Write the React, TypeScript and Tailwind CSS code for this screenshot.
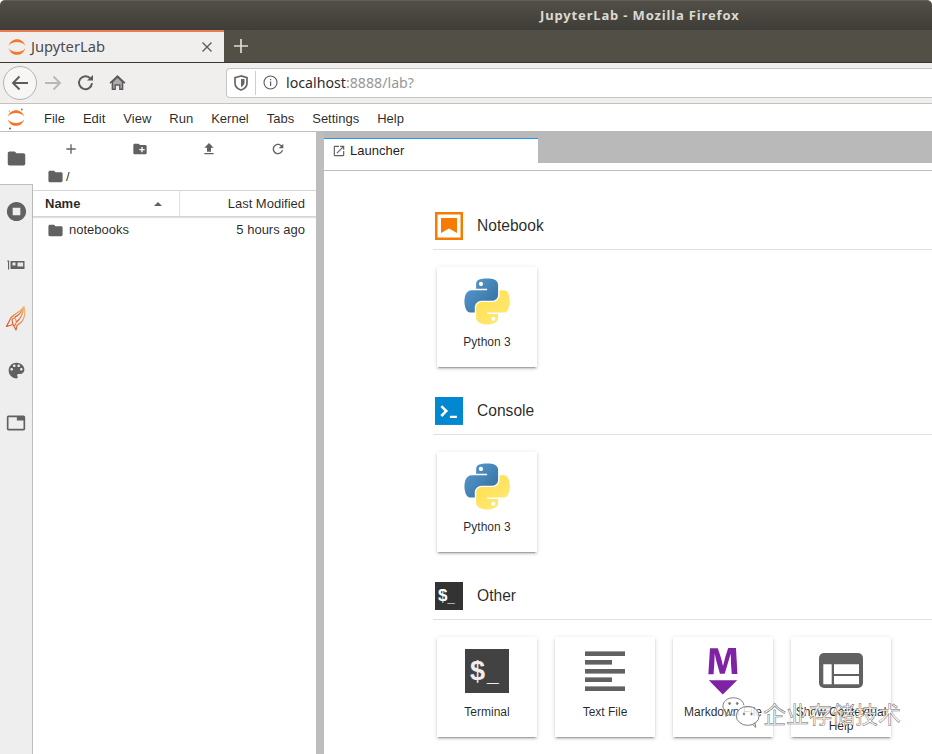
import React from "react";

const sans = "font-['Liberation_Sans',Arial,sans-serif]";
const ui = "font-['Noto_Sans','Open_Sans',sans-serif]";

const P = {
  folder: "M10 4H4c-1.1 0-1.99.9-1.99 2L2 18c0 1.1.9 2 2 2h16c1.1 0 2-.9 2-2V8c0-1.1-.9-2-2-2h-8l-2-2z",
  stop: "M12 2C6.48 2 2 6.48 2 12s4.48 10 10 10 10-4.48 10-10S17.52 2 12 2zm4 14H8V8h8v8z",
  palette:
    "M12 3c-4.97 0-9 4.03-9 9s4.03 9 9 9c.83 0 1.5-.67 1.5-1.5 0-.39-.15-.74-.39-1.01-.23-.26-.38-.61-.38-.99 0-.83.67-1.5 1.5-1.5H16c2.76 0 5-2.24 5-5 0-4.42-4.03-8-9-8zm-5.5 9c-.83 0-1.5-.67-1.5-1.5S5.67 9 6.5 9 8 9.67 8 10.5 7.33 12 6.5 12zm3-4C8.67 8 8 7.33 8 6.5S8.67 5 9.5 5s1.5.67 1.5 1.5S10.33 8 9.5 8zm5 0c-.83 0-1.5-.67-1.5-1.5S13.67 5 14.5 5s1.5.67 1.5 1.5S15.33 8 14.5 8zm3 4c-.83 0-1.5-.67-1.5-1.5S16.67 9 17.5 9s1.5.67 1.5 1.5-.67 1.5-1.5 1.5z",
  tab: "M21 3H3c-1.1 0-2 .9-2 2v14c0 1.1.9 2 2 2h18c1.1 0 2-.9 2-2V5c0-1.1-.9-2-2-2zm0 16H3V5h10v4h8v10z",
  add: "M19 13h-6v6h-2v-6H5v-2h6V5h2v6h6v2z",
  newFolder:
    "M20 6h-8l-2-2H4c-1.11 0-1.99.89-1.99 2L2 18c0 1.11.89 2 2 2h16c1.11 0 2-.89 2-2V8c0-1.11-.89-2-2-2zm-1 8h-3v3h-2v-3h-3v-2h3V9h2v3h3v2z",
  upload: "M9 16h6v-6h4l-7-7-7 7h4zm-4 2h14v2H5z",
  refresh:
    "M17.65 6.35C16.2 4.9 14.21 4 12 4c-4.42 0-7.99 3.58-7.99 8s3.57 8 7.99 8c3.73 0 6.84-2.55 7.73-6h-2.08c-.82 2.33-3.04 4-5.65 4-3.31 0-6-2.69-6-6s2.69-6 6-6c1.66 0 3.14.69 4.22 1.78L13 11h7V4l-2.35 2.35z",
  launch:
    "M19 19H5V5h7V3H5c-1.11 0-2 .9-2 2v14c0 1.1.89 2 2 2h14c1.1 0 2-.9 2-2v-7h-2v7zM14 3v2h3.59l-9.83 9.83 1.41 1.41L19 6.41V10h2V3h-7z",
};

function Mi({ d, size, color = "#616161" }: { d: string; size: number; color?: string }) {
  return (
    <svg width={size} height={size} viewBox="0 0 24 24" fill={color} className="block shrink-0">
      <path d={d} />
    </svg>
  );
}

function Jupyter({ size, dots }: { size: number; dots?: boolean }) {
  return (
    <svg width={size} height={size} viewBox="0 0 24 24" className="block shrink-0 overflow-visible">
      <path d="M2 10.500C5 0 19 0 22 10.500 18 4.500 6 4.500 2 10.500z" fill="#f37726" />
      <path d="M2 13.500C5 24 19 24 22 13.500 18 19.500 6 19.500 2 13.500z" fill="#f37726" />
      {dots && (
        <>
          <circle cx="19" cy="1.800" r="1.100" fill="#777" />
          <circle cx="4" cy="3.800" r="0.800" fill="#999" />
          <circle cx="4.800" cy="24.600" r="1.300" fill="#666" />
        </>
      )}
    </svg>
  );
}

function Python() {
  return (
    <svg width="52" height="52" viewBox="-8.3 -8.5 127 127" className="block">
      <defs>
        <linearGradient id="pyb" x1="0" y1="0" x2="1" y2="1">
          <stop offset="0" stopColor="#5a9fd4" />
          <stop offset="1" stopColor="#306998" />
        </linearGradient>
        <linearGradient id="pyy" x1="0.2" y1="0.1" x2="0.8" y2="0.9">
          <stop offset="0" stopColor="#ffe052" />
          <stop offset="1" stopColor="#ffe873" />
        </linearGradient>
      </defs>
      <path
        fill="url(#pyb)"
        d="M54.918785.00091927C50.335132.02221727 45.957846.41313697 42.106285 1.0946693 30.760069 3.0991731 28.700036 7.2947714 28.700035 15.032169v10.21875h26.8125v3.40625h-26.8125-10.0625c-7.792459 0-14.6157588 4.683717-16.7499998 13.59375-2.46181998 10.212966-2.57101508 16.586023 0 27.25 1.9059283 7.937852 6.4575432 13.593748 14.2499998 13.59375h9.21875v-12.25c0-8.849902 7.657144-16.656248 16.75-16.65625h26.78125c7.454951 0 13.406253-6.138164 13.40625-13.625v-25.53125c0-7.2663386-6.12998-12.7247771-13.40625-13.9375C64.281548.32794397 59.502438-.02037903 54.918785.00091927zm-14.5 8.21875c2.769547 0 5.03125 2.2986456 5.03125 5.125-.000002 2.816336-2.261703 5.09375-5.03125 5.09375-2.779476-.000001-5.03125-2.277415-5.03125-5.09375-.000001-2.8263544 2.251774-5.125 5.03125-5.125z"
      />
      <path
        fill="url(#pyy)"
        d="M85.637535 28.657169v11.90625c0 9.230755-7.825895 16.999999-16.75 17h-26.78125c-7.335833 0-13.406249 6.278483-13.40625 13.625v25.531247c0 7.266344 6.318588 11.540324 13.40625 13.625004 8.487331 2.49561 16.626237 2.94663 26.78125 0 6.750155-1.95439 13.406253-5.88761 13.40625-13.625004V86.500919h-26.78125v-3.40625h26.78125 13.406254c7.792461 0 10.696251-5.435408 13.406241-13.59375 2.79933-8.398886 2.74022-16.475776 0-27.25-1.92578-7.757441-5.60387-13.59375-13.406241-13.59375zm-15.0625 64.65625c2.779478.000003 5.03125 2.277417 5.03125 5.093747-.000002 2.826355-2.251775 5.125004-5.03125 5.125004-2.769549 0-5.03125-2.298649-5.03125-5.125004.000002-2.81633 2.261697-5.093747 5.03125-5.093747z"
      />
    </svg>
  );
}

function Card({ icon, label }: { icon: React.ReactNode; label: string }) {
  return (
    <div className="w-[100px] h-[100px] bg-white flex flex-col items-center pt-2 shadow-[0_2px_2px_0_rgba(0,0,0,0.14),0_3px_1px_-2px_rgba(0,0,0,0.2),0_1px_5px_0_rgba(0,0,0,0.12)]">
      <div className="w-[52px] h-[52px]">{icon}</div>
      <div className={`mt-[8px] text-[12px] leading-[14px] text-center text-black/85 w-[96px] ${sans}`}>{label}</div>
    </div>
  );
}

function Section({ icon, title, children }: { icon: React.ReactNode; title: string; children: React.ReactNode }) {
  return (
    <section className="pb-[30px]">
      <div className="flex items-center h-[27px] pl-[2px]">
        <div className="w-[28px] h-[28px] mr-[14px]">{icon}</div>
        <div className={`text-[15.6px] text-black/85 ${sans}`}>{title}</div>
      </div>
      <div className="mt-[10px] h-px bg-[#e0e0e0]" />
      <div className="flex gap-[18px] pl-[4px] pt-[17px]">{children}</div>
    </section>
  );
}

const NotebookIcon = (
  <svg width="28" height="28" viewBox="0 0 28 28" className="block">
    <rect x="1.250" y="1.250" width="25.500" height="25.500" fill="none" stroke="#f57c00" strokeWidth="2.500" />
    <path d="M6 6h16v15l-8-4.500-8 4.500z" fill="#f57c00" />
  </svg>
);

const ConsoleIcon = (
  <svg width="28" height="28" viewBox="20 20 160 160" className="block">
    <path fill="#0288d1" d="M20 19.8h160v159.9H20z" />
    <path fill="#fff" d="M105 127.3h40v12.8h-40zM51.1 77L74 99.9l-23.3 23.3 10.5 10.5 23.3-23.3L95 99.9 84.5 89.4 61.6 66.5z" />
  </svg>
);

const Sidebar = () => (
  <div className="w-[33px] shrink-0 flex flex-col">
    <div className="h-[53px] bg-white border-t border-[#bdbdbd] flex items-center justify-center pr-px">
      <Mi d={P.folder} size={21} />
    </div>
    <div className="flex-1 bg-[#eeeeee] border-t border-r border-[#bdbdbd] flex flex-col">
      <div className="h-[52px] flex items-center justify-center">
        <Mi d={P.stop} size={23} />
      </div>
      <div className="h-[55px] flex items-center justify-center">
        <svg width="20" height="12" viewBox="0 0 20 12" className="block">
          <path d="M1.500 1.500h1.600v9H2V3H1.500z" fill="#616161" />
          <path d="M4.500 2h14v8H4.500z" fill="#616161" />
          <path d="M11.500 3.400h5.600v4h-5.600zM6.500 3.400h3v3h-3z" fill="#e8e8e8" />
        </svg>
      </div>
      <div className="h-[52px] flex items-center justify-center">
        <svg width="22" height="28" viewBox="0 0 22 28" fill="none" className="block">
          <defs>
            <linearGradient id="fe" x1="0" y1="1" x2="1" y2="0">
              <stop offset="0" stopColor="#d9471f" />
              <stop offset="0.6" stopColor="#ea8a4a" />
              <stop offset="1" stopColor="#f6c27a" />
            </linearGradient>
          </defs>
          <g stroke="url(#fe)" strokeWidth="1.200" strokeLinejoin="round">
            <path d="M1.500 22.500L6 13.500C9.500 10 15 8.500 19 2.500 20.500 8 20 13 17 17.500L12 21.500 11 26 8 20.500z" />
            <path d="M8 20.500L7 15.500 10 13 11.500 18 9.500 22" />
            <path d="M11.500 18C15.500 15 18 10 19 2.500" />
            <path d="M10 13C13.500 11.500 16.500 8.500 19 2.500" />
          </g>
        </svg>
      </div>
      <div className="h-[53px] flex items-center justify-center">
        <Mi d={P.palette} size={21} />
      </div>
      <div className="h-[52px] flex items-center justify-center">
        <Mi d={P.tab} size={20} />
      </div>
    </div>
  </div>
);

const FilePanel = () => (
  <div className={`w-[283px] shrink-0 bg-white border-t border-[#bdbdbd] flex flex-col text-[13px] text-black/85 ${sans}`}>
    <div className="h-[34px] px-[3.5px] flex items-center">
      {[P.add, P.newFolder, P.upload, P.refresh].map((d) => (
        <div key={d} className="flex-1 flex justify-center">
          <Mi d={d} size={16} />
        </div>
      ))}
    </div>
    <div className="h-[24px] pl-[14px] pb-[3px] flex items-center gap-[2px]">
      <Mi d={P.folder} size={17} />
      <span>/</span>
    </div>
    <div className="h-[27px] border-t border-b border-[#d5d5d5] shadow-[0_1px_1px_rgba(0,0,0,0.12)] flex items-center">
      <div className="w-[147px] h-full flex items-center justify-between pl-[12px] pr-[17px] border-r border-[#e0e0e0] font-bold">
        <span>Name</span>
        <svg width="8" height="4" viewBox="0 0 8 4" className="block">
          <path d="M0 4L4 0l4 4z" fill="#616161" />
        </svg>
      </div>
      <div className="flex-1 text-right pr-[11px]">Last Modified</div>
    </div>
    <div className="h-[26px] flex items-center pl-[14px] pr-[11px]">
      <Mi d={P.folder} size={17} />
      <span className="ml-[5px]">notebooks</span>
      <span className="ml-auto">5 hours ago</span>
    </div>
  </div>
);

const LineIcon = (
  <svg width="52" height="52" viewBox="0 0 52 52" className="block" fill="#616161">
    <rect x="6" y="6.400" width="40" height="4.600" />
    <rect x="6" y="15" width="27" height="4.600" />
    <rect x="6" y="24" width="40" height="4.600" />
    <rect x="6" y="32.400" width="27" height="4.600" />
    <rect x="6" y="41.400" width="40" height="4.600" />
  </svg>
);

const TerminalIcon = (
  <div className="w-[52px] h-[52px] flex items-center justify-center">
    <div className={`w-[44px] h-[44px] bg-[#424242] flex items-center pl-[5px] text-[#eeeeee] font-bold ${sans}`}>
      <span className="text-[27px] leading-none">$</span>
      <span className="text-[21px] leading-none mt-[5px] ml-[2px]">_</span>
    </div>
  </div>
);

const MarkdownIcon = (
  <svg width="52" height="52" viewBox="0 0 22 22" className="block">
    <path
      fill="#7f22a6"
      d="M5 14.900h12l-6.100 6zm9.400-6.800c0-1.300-.1-2.900-.1-4.500-.4 1.400-.9 2.900-1.300 4.300l-1.300 4.300h-2L8.500 7.900c-.4-1.300-.7-2.900-1-4.300-.1 1.600-.1 3.200-.2 4.600L7 12.400H4.800l.7-11h3.300L10 5c.4 1.200.7 2.700 1 3.900.3-1.200.7-2.600 1-3.900l1.200-3.700h3.300l.6 11h-2.400l-.3-4.200z"
    />
  </svg>
);

const HelpIcon = (
  <svg width="52" height="52" viewBox="0 0 52 52" className="block">
    <rect x="4" y="8" width="44" height="35" rx="5" fill="#616161" />
    <path d="M8.300 19.300h8.400v20H8.300zM19 19.300h25V29H19zM19 31h25v8.300H19z" fill="#fff" />
  </svg>
);

const Launcher = () => (
  <div className="flex-1 min-w-0 bg-white flex flex-col overflow-hidden">
    <div className="h-[32px] bg-[#b9b9b9] shrink-0 flex items-end">
      <div className="w-[214px] h-[25px] bg-white border-t border-[#2196f3] flex items-center pl-[8px] gap-[4px]">
        <Mi d={P.launch} size={14} />
        <span className={`text-[13px] text-black/90 ${sans}`}>Launcher</span>
      </div>
    </div>
    <div className="h-[8px] shrink-0 bg-white border-b border-[#bdbdbd]" />
    <div className="pl-[109px] pt-[41px] w-[608px] shrink-0">
      <Section icon={NotebookIcon} title="Notebook">
        <Card icon={<Python />} label="Python 3" />
      </Section>
      <Section icon={ConsoleIcon} title="Console">
        <Card icon={<Python />} label="Python 3" />
      </Section>
      <Section
        icon={
          <div className={`w-[28px] h-[28px] bg-[#333333] flex items-center pl-[3px] text-white font-bold ${sans}`}>
            <span className="text-[17px] leading-none">$</span>
            <span className="text-[13px] leading-none mt-[4px]">_</span>
          </div>
        }
        title="Other"
      >
        <Card icon={TerminalIcon} label="Terminal" />
        <Card icon={LineIcon} label="Text File" />
        <Card icon={MarkdownIcon} label="Markdown File" />
        <Card icon={HelpIcon} label="Show Contextual Help" />
      </Section>
    </div>
  </div>
);

export default function App() {
  return (
    <div className="relative w-[932px] h-[754px] overflow-hidden bg-white flex flex-col">
      {/* window title */}
      <div className="h-[30px] shrink-0 bg-gradient-to-b from-[#514f47] to-[#3f3d37] border-t border-[#615e56] rounded-t-[5px] pl-[540px] flex items-center">
        <span className={`text-[13px] font-bold tracking-[0.85px] text-[#dcd9d2] ${ui}`}>JupyterLab - Mozilla Firefox</span>
      </div>
      {/* tab strip */}
      <div className="h-[33px] shrink-0 bg-[#524f47] border-b border-[#37352f] flex items-stretch">
        <div className="w-[224px] bg-[#f0efed] border-t-2 border-[#e97b50] flex items-center pl-[7px] pr-[11px] pb-[1px]">
          <Jupyter size={20} />
          <span className={`ml-[4px] text-[14.7px] text-[#4b4b50] ${ui}`}>JupyterLab</span>
          <svg width="12" height="12" viewBox="0 0 12 12" className="ml-auto block" stroke="#5c5c5f" strokeWidth="1.400">
            <path d="M1.500 1.500l9 9M10.500 1.500l-9 9" />
          </svg>
        </div>
        <div className="w-[34px] flex items-center justify-center">
          <svg width="14" height="14" viewBox="0 0 14 14" stroke="#dedbd4" strokeWidth="1.700" className="block">
            <path d="M7 0v14M0 7h14" />
          </svg>
        </div>
      </div>
      {/* nav bar */}
      <div className="h-[41px] shrink-0 bg-[#f0efed] border-b border-[#c3c2bf] flex items-center pl-[3px] pb-[1px]">
        <div className="w-[34px] h-[34px] rounded-full border border-[#b3b2af] bg-[#f7f6f5] flex items-center justify-center">
          <svg width="18" height="16" viewBox="0 0 18 16" fill="none" stroke="#5b5b5e" strokeWidth="1.900" className="block">
            <path d="M17 8H2M8.500 1.500L2 8l6.500 6.500" />
          </svg>
        </div>
        <svg width="18" height="16" viewBox="0 0 18 16" fill="none" stroke="#b9b8b6" strokeWidth="1.900" className="block ml-[7px]">
          <path d="M1 8h15M9.500 1.500L16 8l-6.500 6.500" />
        </svg>
        <svg width="17" height="16" viewBox="0 0 17 16" fill="none" className="block ml-[15px]">
          <path d="M13.500 3.500A6.500 6.500 0 1 0 15 8.200" stroke="#5b5b5e" strokeWidth="1.900" />
          <path d="M10 5.500h6V0z" fill="#5b5b5e" />
        </svg>
        <svg width="17" height="17" viewBox="0 0 16 16" className="block ml-[15px]">
          <path d="M8 1L0.500 8l1 1.100L2.500 8.200V15h4v-4h3v4h4V8.200l1 .9 1-1.100z" fill="#5b5b5e" />
          <path d="M4 7.600L8 3.800l4 3.800v6h-1.200v-4H5.200v4H4z" fill="#f0efed" opacity="0.550" />
        </svg>
        <div className="ml-[100px] flex-1 h-[30px] bg-white border border-[#c6c5c2] rounded-l-[4px] border-r-0 flex items-center pl-[7px]">
          <svg width="14" height="16" viewBox="0 0 14 16" className="block" fill="none">
            <path d="M7 1L1 2.600V8c0 3.400 3 6 6 7 3-1 6-3.600 6-7V2.600z" stroke="#666" strokeWidth="1.700" />
            <path d="M7 4v8c2-.9 3.500-2.500 3.500-4.500V4z" fill="#666" />
          </svg>
          <div className="w-px h-[24px] bg-[#cfcecb] ml-[7px]" />
          <svg width="15" height="15" viewBox="0 0 15 15" className="block ml-[7px]" fill="none">
            <circle cx="7.500" cy="7.500" r="6.500" stroke="#5b5b5e" strokeWidth="1.100" />
            <path d="M7 6.500h1.200V11H7zM7 4h1.200v1.300H7z" fill="#5b5b5e" />
          </svg>
          <span className={`ml-[8px] text-[14.2px] ${ui}`}>
            <span className="text-[#2d2d30]">localhost</span>
            <span className="text-[#97979a]">:8888/lab?</span>
          </span>
        </div>
      </div>
      {/* app menu */}
      <div className="h-[27px] shrink-0 bg-white flex items-center pl-[6px]">
        <Jupyter size={20} dots />
        <div className={`ml-[18px] pt-[2px] flex gap-[18px] text-[13px] text-black/85 ${sans}`}>
          {["File", "Edit", "View", "Run", "Kernel", "Tabs", "Settings", "Help"].map((m) => (
            <span key={m}>{m}</span>
          ))}
        </div>
      </div>
      {/* workspace */}
      <div className="flex-1 min-h-0 flex">
        <Sidebar />
        <FilePanel />
        <div className="w-[8px] shrink-0 bg-[#bdbdbd]" />
        <Launcher />
      </div>
      {/* watermark */}
      <div className="absolute left-[722px] top-[696px] flex items-center">
        <svg width="40" height="34" viewBox="0 0 42 34" fill="none" stroke="#777" strokeWidth="1" className="block drop-shadow-[0_0_1px_rgba(255,255,255,0.9)]">
          <path d="M12 1C5.500 1 1 5 1 10c0 3 1.600 5.300 4 7l-1 3.500 4-2c1.500.4 2.500.6 4 .6" />
          <path d="M12 1c6 0 10.500 3.500 11 8" />
          <ellipse cx="27" cy="20" rx="12" ry="10" fill="rgba(255,255,255,0.6)" />
          <path d="M32 29l3.500 3-1-5" />
          <circle cx="8" cy="7" r="1" fill="#777" />
          <circle cx="16" cy="7" r="1" fill="#777" />
          <circle cx="23" cy="18" r="0.800" fill="#777" />
          <circle cx="31" cy="18" r="0.800" fill="#777" />
        </svg>
        <span className="ml-[1px] text-[23px] leading-none text-white [-webkit-text-stroke:0.5px_rgba(60,60,60,0.8)] font-['Noto_Sans_CJK_SC',sans-serif]">
          企业存储技术
        </span>
      </div>
    </div>
  );
}
